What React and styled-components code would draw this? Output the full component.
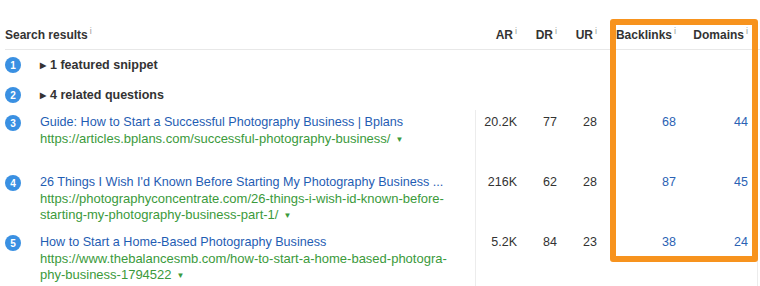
import React from "react";
import styled, { createGlobalStyle } from "styled-components";

const rows = [
	{
		n: 3,
		title: "Guide: How to Start a Successful Photography Business | Bplans",
		url: "https://articles.bplans.com/successful-photography-business/",
		ar: "20.2K",
		dr: 77,
		ur: 28,
		backlinks: 68,
		domains: 44,
	},
	{
		n: 4,
		title: "26 Things I Wish I'd Known Before Starting My Photography Business ...",
		url: "https://photographyconcentrate.com/26-things-i-wish-id-known-before-starting-my-photography-business-part-1/",
		ar: "216K",
		dr: 62,
		ur: 28,
		backlinks: 87,
		domains: 45,
	},
	{
		n: 5,
		title: "How to Start a Home-Based Photography Business",
		url: "https://www.thebalancesmb.com/how-to-start-a-home-based-photogra-phy-business-1794522",
		ar: "5.2K",
		dr: 84,
		ur: 23,
		backlinks: 38,
		domains: 24,
	},
];

const App = () => {
	return (
		<>
			<GlobalStyle />
			<Page>
				<Table>
					<HeadRow>
						<HeadCell $left>
							Search results<Info>i</Info>
						</HeadCell>
						<HeadCell>
							AR<Info>i</Info>
						</HeadCell>
						<HeadCell>
							DR<Info>i</Info>
						</HeadCell>
						<HeadCell>
							UR<Info>i</Info>
						</HeadCell>
						<HeadCell>
							Backlinks<Info>i</Info>
						</HeadCell>
						<HeadCell>
							Domains<Info>i</Info>
						</HeadCell>
						<span />
					</HeadRow>

					<FeatureRow>
						<Badge>1</Badge>
						<Feature>
							<Arrow>▶</Arrow>1 featured snippet
						</Feature>
					</FeatureRow>
					<FeatureRow>
						<Badge>2</Badge>
						<Feature>
							<Arrow>▶</Arrow>4 related questions
						</Feature>
					</FeatureRow>

					{rows.map((r) => (
						<ResultRow key={r.n}>
							<TitleCell>
								<Badge>{r.n}</Badge>
								<div>
									<Title>{r.title}</Title>
									<Url>
										{r.url}
										<Caret>▼</Caret>
									</Url>
								</div>
							</TitleCell>
							<Num $divider>{r.ar}</Num>
							<Num>{r.dr}</Num>
							<Num>{r.ur}</Num>
							<Num $link>{r.backlinks}</Num>
							<Num $link>{r.domains}</Num>
							<Edge />
						</ResultRow>
					))}
				</Table>
				<Highlight />
			</Page>
		</>
	);
};

export default App;

const GlobalStyle = createGlobalStyle`
	html, body {
		margin: 0;
		background: #fff;
	}
	body {
		font-family: "Liberation Sans", Arial, sans-serif;
		font-size: 13px;
		color: #333;
	}
`;

const Page = styled.div`
	position: relative;
	width: 760px;
	height: 286px;
	overflow: hidden;
	padding: 20px 0 0 5px;
	box-sizing: border-box;
`;

const Table = styled.div`
	width: 755px;
`;

const cols = "470px 42px 40px 40px 79px 72px 12px";

const HeadRow = styled.div`
	display: grid;
	grid-template-columns: ${cols};
	height: 30px;
	align-items: center;
	border-bottom: 1px solid #e8e8e8;
	box-sizing: border-box;
`;

const HeadCell = styled.div`
	font-weight: bold;
	font-size: 12px;
	color: #333;
	text-align: ${(p) => (p.$left ? "left" : "right")};
	white-space: nowrap;
`;

const Info = styled.sup`
	font-weight: normal;
	font-size: 9px;
	color: #999;
	margin-left: 2px;
	vertical-align: 5px;
	line-height: 0;
`;

const FeatureRow = styled.div`
	display: flex;
	align-items: center;
	height: 30px;
	gap: 19px;
`;

const Badge = styled.span`
	display: inline-flex;
	align-items: center;
	justify-content: center;
	flex: none;
	width: 16px;
	height: 16px;
	border-radius: 50%;
	background: #3a90e2;
	color: #fff;
	font-size: 10px;
	font-weight: bold;
`;

const Feature = styled.div`
	font-weight: bold;
	font-size: 12.5px;
	color: #333;
`;

const Arrow = styled.span`
	font-size: 8px;
	margin-right: 4px;
	vertical-align: 1px;
`;

const ResultRow = styled.div`
	display: grid;
	grid-template-columns: ${cols};
	min-height: 60px;
`;

const TitleCell = styled.div`
	display: flex;
	gap: 19px;
	padding: 4px 0 5px;
	> ${Badge} {
		margin-top: 1px;
	}
`;

const Title = styled.div`
	color: #1f5db3;
	font-size: 12.6px;
	line-height: 17px;
	white-space: nowrap;
`;

const Url = styled.div`
	color: #3b9a3b;
	line-height: 16px;
	width: 410px;
	word-break: break-all;
`;

const Caret = styled.span`
	display: inline-block;
	margin-left: 5px;
	font-size: 8px;
	line-height: 8px;
	vertical-align: 1px;
`;

const Num = styled.div`
	text-align: right;
	padding-top: 4px;
	font-size: 12.5px;
	line-height: 17px;
	color: ${(p) => (p.$link ? "#2b62b4" : "#333")};
	border-left: ${(p) => (p.$divider ? "1px solid #ececec" : "none")};
`;

const Edge = styled.div`
	border-right: 1px solid #ececec;
	margin-right: 2px;
`;

const Highlight = styled.div`
	position: absolute;
	left: 610px;
	top: 19px;
	width: 148px;
	height: 243px;
	box-sizing: border-box;
	border: 6px solid #f7931e;
	border-radius: 3px;
	pointer-events: none;
`;
